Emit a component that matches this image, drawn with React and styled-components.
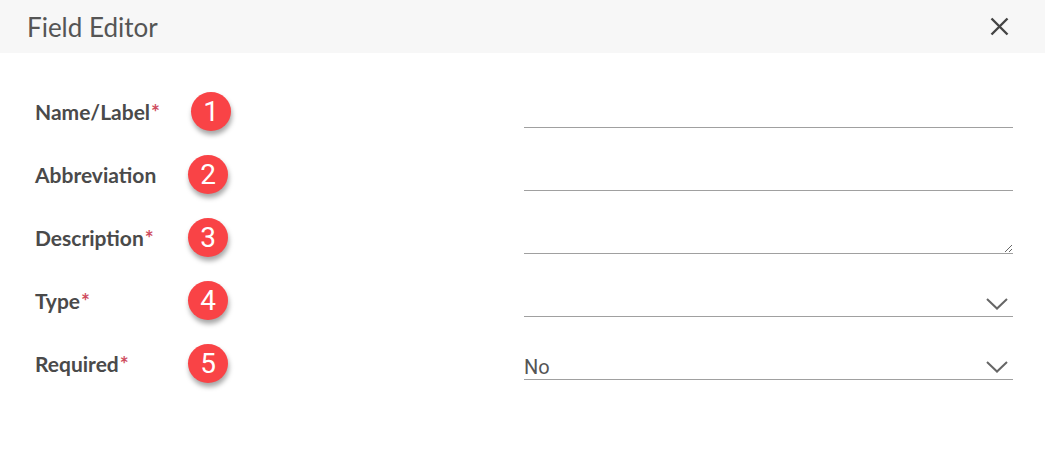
import React from "react";
import styled, { createGlobalStyle } from "styled-components";

const Global = createGlobalStyle`
  html, body { margin: 0; padding: 0; background: #fff; }
  body { font-family: Lato, "Open Sans", sans-serif; }
  * { box-sizing: border-box; }
`;

const Dialog = styled.div`
  width: 1045px;
  height: 452px;
  background: #fff;
  display: flex;
  flex-direction: column;
`;

const Header = styled.header`
  height: 53px;
  background: #f7f7f7;
  display: flex;
  align-items: center;
  justify-content: space-between;
  padding: 0 36px 0 27px;
`;

const Title = styled.h1`
  margin: 0;
  font-family: Lato, sans-serif;
  font-weight: 400;
  font-size: 26px;
  color: #555;
`;

const CloseButton = styled.button`
  border: 0;
  background: none;
  padding: 0;
  width: 20px;
  height: 20px;
  display: flex;
  align-items: center;
  justify-content: center;
  cursor: pointer;
  margin-top: -1px;
`;

const Body = styled.div`
  padding: 27px 32px 0 35px;
  display: flex;
  flex-direction: column;
`;

const Row = styled.div`
  height: 63px;
  display: flex;
  align-items: center;
`;

const Label = styled.label`
  width: 153px;
  font-family: Lato, sans-serif;
  font-weight: 700;
  font-size: 21px;
  color: #4a4a4a;
`;

const Star = styled.span`
  color: #cf4c5e;
  font-weight: 700;
  margin-left: 1px;
`;

const Badge = styled.span`
  width: 40px;
  height: 39px;
  margin-left: ${(p) => p.$dx || 0}px;
  border-radius: 50%;
  background: #f94346;
  color: #fff;
  font-family: Roboto, Arial, sans-serif;
  font-size: 28px;
  display: flex;
  align-items: center;
  justify-content: center;
  box-shadow: 1px 4px 5px rgba(0, 0, 0, 0.35);
`;

const Field = styled.div`
  margin-left: auto;
  width: 489px;
  height: 33px;
  border-bottom: 1px solid #a0a0a0;
  display: flex;
  align-items: flex-end;
  justify-content: space-between;
  padding: 0 5px 5px 0;
`;

const TextInput = styled.input`
  margin-left: auto;
  width: 489px;
  height: 33px;
  border: 0;
  border-bottom: 1px solid #a0a0a0;
  outline: none;
  font-family: Roboto, Arial, sans-serif;
  font-size: 20px;
  color: #555;
  padding: 0;
  background: transparent;
`;

const TextArea = styled.textarea`
  margin-left: auto;
  width: 489px;
  height: 33px;
  border: 0;
  border-bottom: 1px solid #a0a0a0;
  outline: none;
  resize: vertical;
  font-family: Roboto, Arial, sans-serif;
  font-size: 20px;
  padding: 0;
  display: block;
  background: transparent;
`;

const Value = styled.span`
  font-family: Roboto, Arial, sans-serif;
  font-size: 20px;
  font-weight: 400;
  color: #555;
  line-height: 1;
  margin-bottom: -3px;
`;

const Chevron = () => (
  <svg width="22" height="12" viewBox="0 0 22 12" style={{ marginBottom: 1 }}>
    <path d="M1 1 L11 10.5 L21 1" fill="none" stroke="#666" strokeWidth="2" />
  </svg>
);

const CloseIcon = () => (
  <svg width="19" height="19" viewBox="0 0 19 19">
    <path d="M1.5 1.5 L17.5 17.5 M17.5 1.5 L1.5 17.5" stroke="#444" strokeWidth="2.4" />
  </svg>
);

const Select = ({ value }) => (
  <Field>
    <Value>{value}</Value>
    <Chevron />
  </Field>
);

export default function App() {
  return (
    <>
      <Global />
      <Dialog>
        <Header>
          <Title>Field Editor</Title>
          <CloseButton aria-label="Close">
            <CloseIcon />
          </CloseButton>
        </Header>
        <Body>
          <Row>
            <Label>Name/Label<Star>*</Star></Label>
            <Badge $dx={3}>1</Badge>
            <TextInput />
          </Row>
          <Row>
            <Label>Abbreviation</Label>
            <Badge>2</Badge>
            <TextInput />
          </Row>
          <Row>
            <Label>Description<Star>*</Star></Label>
            <Badge>3</Badge>
            <TextArea />
          </Row>
          <Row>
            <Label>Type<Star>*</Star></Label>
            <Badge>4</Badge>
            <Select value="" />
          </Row>
          <Row>
            <Label>Required<Star>*</Star></Label>
            <Badge>5</Badge>
            <Select value="No" />
          </Row>
        </Body>
      </Dialog>
    </>
  );
}
